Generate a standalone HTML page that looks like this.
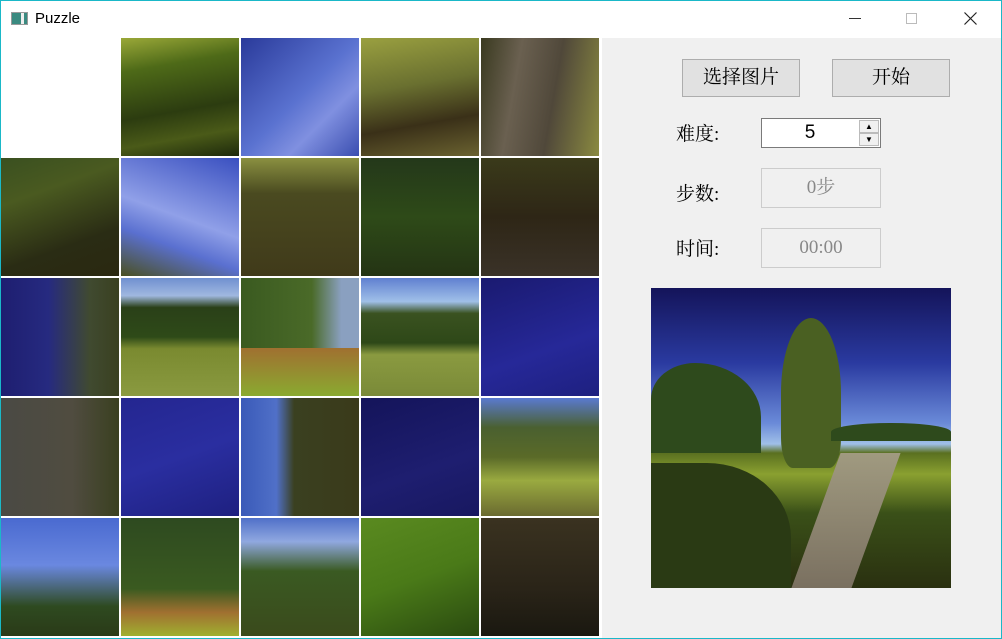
<!DOCTYPE html>
<html><head><meta charset="utf-8"><style>
*{margin:0;padding:0;box-sizing:border-box}
body{width:1002px;height:639px;overflow:hidden;background:#fff;font-family:"Liberation Sans","Noto Sans CJK SC",sans-serif;position:relative}
.win{position:absolute;left:0;top:0;width:1002px;height:639px}
.frame{position:absolute;left:0;top:0;width:1002px;height:639px;border:1px solid #1ab8c8;pointer-events:none}
.title{position:absolute;left:0;top:0;width:1002px;height:38px;background:#fff}
.title .t{position:absolute;left:35px;top:10px;font-size:15px;color:#000}
.ico{position:absolute;left:11px;top:12px;width:17px;height:13px;border:1px solid #999;background:linear-gradient(90deg,#3a8a80 0 60%,#eee 60% 80%,#3a8a80 80%)}
.grid{position:absolute;left:1px;top:38px;width:600px;height:600px;background:#fff}
.tile{position:absolute;width:118px;height:118px}
.panel{position:absolute;left:602px;top:38px;width:399px;height:600px;background:#f0f0f0}
.btn{position:absolute;top:21px;height:38px;width:118px;background:#e1e1e1;border:1px solid #adadad;font-family:"Liberation Serif","Noto Serif CJK SC",serif;font-size:19px;text-align:center;line-height:36px;color:#000}
.lbl{position:absolute;left:74px;font-family:"Liberation Serif","Noto Serif CJK SC",serif;font-size:19px;color:#000}
.box{position:absolute;left:159px;width:120px;border:1px solid #ccc;background:#f0f0f0;color:#888;text-align:center;font-family:"Liberation Serif","Noto Serif CJK SC",serif;font-size:19px}
</style></head><body>
<div class="win">
<div class="title"><div class="ico"></div><div class="t">Puzzle</div>
<div style="position:absolute;left:849px;top:18px;width:12px;height:1px;background:#333"></div>
<div style="position:absolute;left:906px;top:13px;width:11px;height:11px;border:1px solid #bbb"></div>
<svg style="position:absolute;left:964px;top:12px" width="13" height="13"><path d="M0.5 0.5L12.5 12.5M12.5 0.5L0.5 12.5" stroke="#222" stroke-width="1.2"/></svg></div>
<div class="grid">
<div class="tile" style="left:0;top:0;background:#fff"></div>
<div class="tile" style="left:120px;top:0;background:linear-gradient(170deg,#9aa838 0,#4e6a18 25%,#2c3c10 60%,#4a5a18 80%,#1e2a0c 100%)"></div>
<div class="tile" style="left:240px;top:0;background:linear-gradient(135deg,#2a3a9a,#5a72d0 50%,#8090e0 70%,#3a4eb0)"></div>
<div class="tile" style="left:360px;top:0;background:linear-gradient(170deg,#9aa040 0,#6a7030 40%,#3a3018 70%,#6a6230 100%)"></div>
<div class="tile" style="left:480px;top:0;background:linear-gradient(100deg,#3a3a20 0,#6a6050 30%,#50483a 60%,#8a8a40 100%)"></div>

<div class="tile" style="left:0;top:120px;background:linear-gradient(160deg,#3a5020 0,#4a5a20 30%,#2a2c14 70%,#2a2810)"></div>
<div class="tile" style="left:120px;top:120px;background:linear-gradient(200deg,#3a50c0 0,#90a0e8 50%,#5a70d0 70%,#4a5020 100%)"></div>
<div class="tile" style="left:240px;top:120px;background:linear-gradient(180deg,#8a9040 0,#4a4a20 30%,#403a1a 100%)"></div>
<div class="tile" style="left:360px;top:120px;background:linear-gradient(180deg,#24381a,#2e4a18 50%,#243414)"></div>
<div class="tile" style="left:480px;top:120px;background:linear-gradient(180deg,#3a3a1a,#2e2616 50%,#3a3228)"></div>

<div class="tile" style="left:0;top:240px;background:linear-gradient(90deg,#1e1e70 0,#262a80 40%,#404a30 75%,#3a4020)"></div>
<div class="tile" style="left:120px;top:240px;background:linear-gradient(180deg,#7090d0 0,#a0b8e0 15%,#2a4018 25%,#2e4a18 50%,#7a8a30 60%,#8a9a40 100%)"></div>
<div class="tile" style="left:240px;top:240px;background:linear-gradient(90deg,#3a5a20,#4a6a28 60%,#8aa0c0 85%),#3a5a20"><div style="position:absolute;left:0;top:70px;width:118px;height:48px;background:linear-gradient(180deg,#a07030,#8aaa30)"></div></div>
<div class="tile" style="left:360px;top:240px;background:linear-gradient(180deg,#6080d0 0,#a0c0e8 20%,#3a5220 30%,#2e4818 55%,#8a9a40 65%,#7a8a38 100%)"></div>
<div class="tile" style="left:480px;top:240px;background:linear-gradient(160deg,#1a1a70,#262898 60%,#1e2080)"></div>

<div class="tile" style="left:0;top:360px;background:linear-gradient(90deg,#4a4a44,#504c40 60%,#3a4020)"></div>
<div class="tile" style="left:120px;top:360px;background:linear-gradient(160deg,#242690,#2a2ea0 50%,#1e2080)"></div>
<div class="tile" style="left:240px;top:360px;background:linear-gradient(90deg,#3a5ab8 0,#5070c8 30%,#3a4020 45%,#3a3a1a 100%)"></div>
<div class="tile" style="left:360px;top:360px;background:linear-gradient(160deg,#14145a,#1e1e70 60%,#181860)"></div>
<div class="tile" style="left:480px;top:360px;background:linear-gradient(180deg,#5a7ad0 0,#4a6030 25%,#5a6a28 50%,#9aaa40 70%,#6a6a30 100%)"></div>

<div class="tile" style="left:0;top:480px;background:linear-gradient(180deg,#4a6ad0 0,#6a88e0 40%,#2e4a20 75%,#2a3a18)"></div>
<div class="tile" style="left:120px;top:480px;background:linear-gradient(180deg,#2e4a20 0,#3a5a20 60%,#a07030 80%,#a0b030 100%)"></div>
<div class="tile" style="left:240px;top:480px;background:linear-gradient(180deg,#5070c8 0,#90a8e0 20%,#3a5a22 45%,#3a4a1c 100%)"></div>
<div class="tile" style="left:360px;top:480px;background:linear-gradient(160deg,#5a8a20,#4a7a18 50%,#2a4a10)"></div>
<div class="tile" style="left:480px;top:480px;background:linear-gradient(180deg,#3a3220,#2a2418 60%,#1a1810)"></div>
</div>
<div class="panel">
<div class="btn" style="left:80px">选择图片</div>
<div class="btn" style="left:230px">开始</div>
<div class="lbl" style="top:81px">难度:</div>
<div style="position:absolute;left:159px;top:80px;width:120px;height:30px;background:#fff;border:1px solid #7a7a7a;font-size:19px;text-align:center;line-height:28px;padding-right:22px">5
<div style="position:absolute;right:1px;top:1px;width:20px;height:13px;border:1px solid #bbb;background:#f0f0f0;font-size:8px;line-height:11px">&#9650;</div>
<div style="position:absolute;right:1px;top:14px;width:20px;height:13px;border:1px solid #bbb;background:#f0f0f0;font-size:8px;line-height:11px">&#9660;</div></div>
<div class="lbl" style="top:141px">步数:</div>
<div class="box" style="top:130px;height:40px;line-height:38px">0步</div>
<div class="lbl" style="top:196px">时间:</div>
<div class="box" style="top:190px;height:40px;line-height:38px">00:00</div>
<div style="position:absolute;left:49px;top:250px;width:300px;height:300px;overflow:hidden;background:linear-gradient(180deg,#14145a 0,#2a3aa0 25%,#6a8ad8 45%,#a0c0e8 52%,#5a7020 55%,#8aa030 62%,#3a5018 75%,#2a3010 100%)">
<div style="position:absolute;left:0;top:75px;width:110px;height:90px;background:#2e4a1c;border-radius:40% 60% 0 0"></div>
<div style="position:absolute;left:130px;top:30px;width:60px;height:150px;background:#4a6022;border-radius:50% 50% 20% 20%"></div>
<div style="position:absolute;left:180px;top:135px;width:120px;height:18px;background:#2e4a1c;border-radius:50% 50% 0 0"></div>
<div style="position:absolute;left:165px;top:165px;width:60px;height:135px;background:linear-gradient(180deg,#a09a80,#7a7060);transform:skewX(-20deg)"></div>
<div style="position:absolute;left:0;top:175px;width:140px;height:125px;background:#2a3a14;border-radius:0 60% 0 0"></div>
</div>
</div>
<div class="frame"></div>
</div>
</body></html>
